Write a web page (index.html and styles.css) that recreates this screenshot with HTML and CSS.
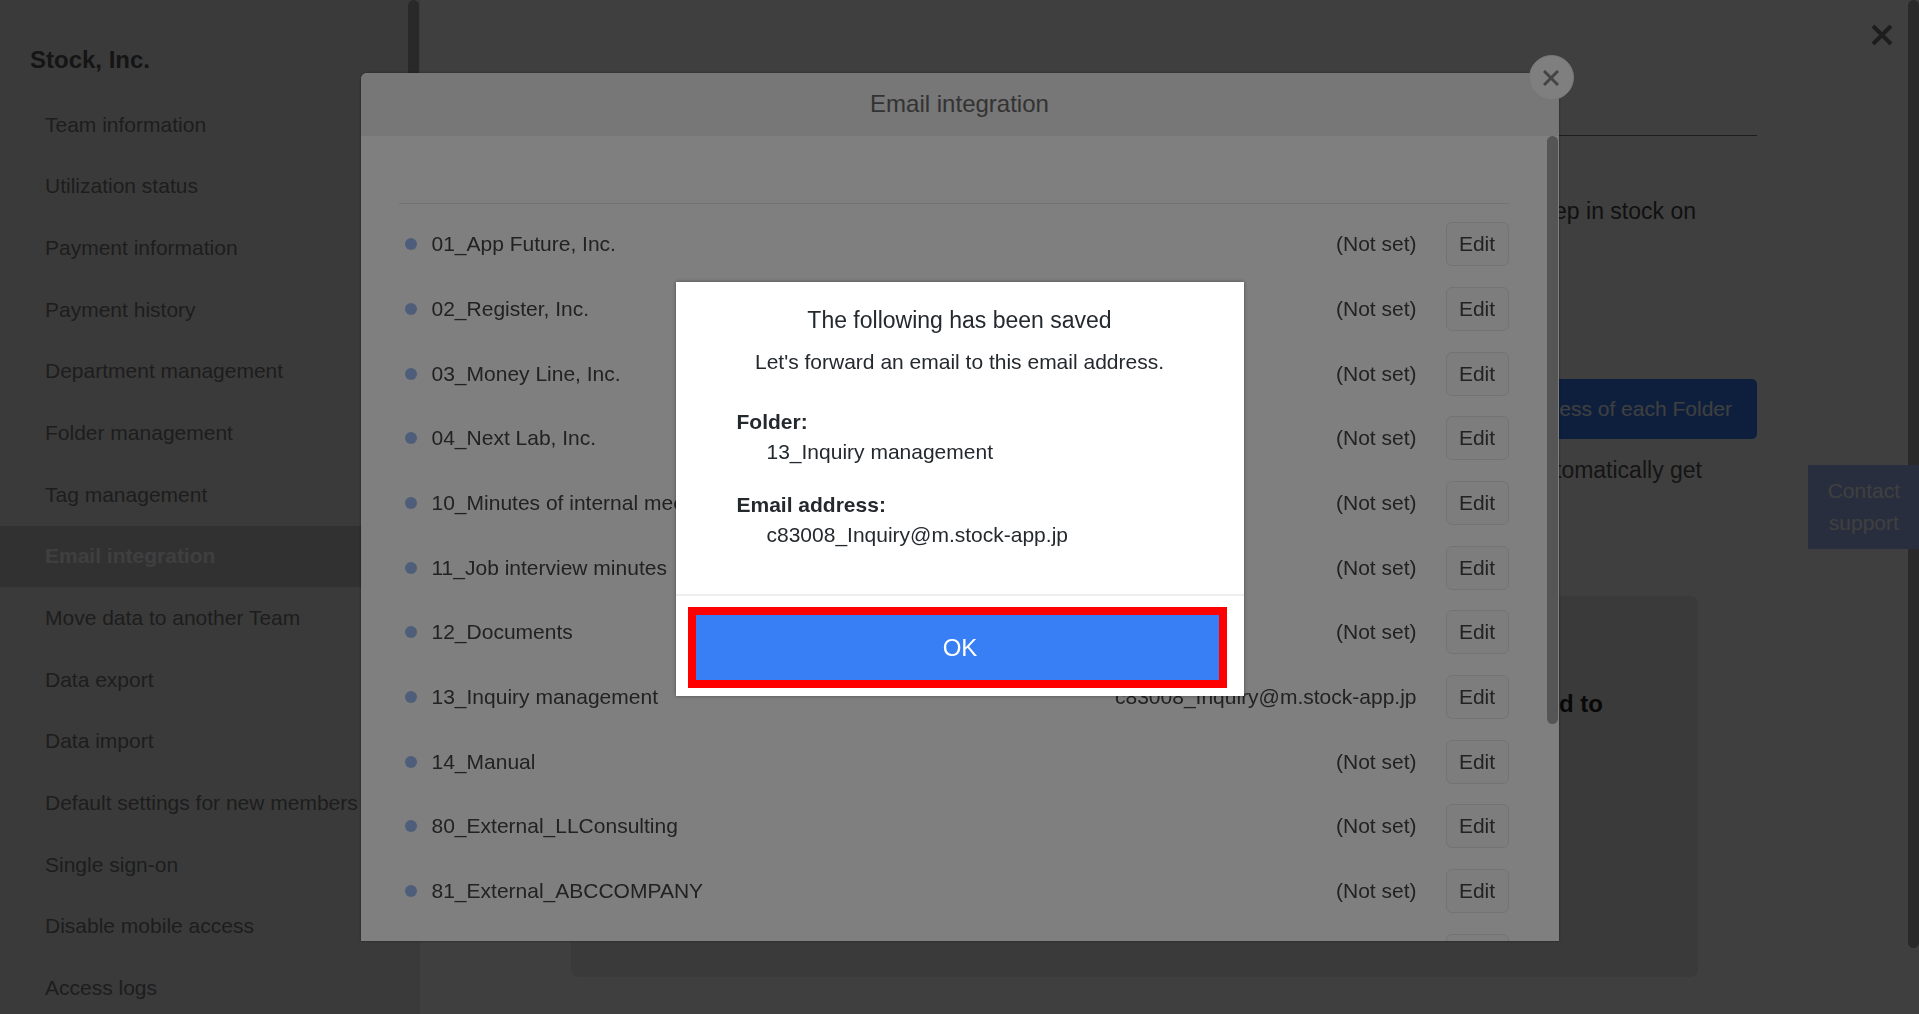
FILE: index.html
```html
<!DOCTYPE html>
<html lang="en">
<head>
<meta charset="utf-8">
<title>Email integration</title>
<link rel="stylesheet" href="styles.css">
</head>
<body>
<div class="app">
  <aside class="sidebar">
    <h1 class="team">Stock, Inc.</h1>
    <nav class="menu">
      <a href="#">Team information</a>
      <a href="#">Utilization status</a>
      <a href="#">Payment information</a>
      <a href="#">Payment history</a>
      <a href="#">Department management</a>
      <a href="#">Folder management</a>
      <a href="#">Tag management</a>
      <a href="#" class="active">Email integration</a>
      <a href="#">Move data to another Team</a>
      <a href="#">Data export</a>
      <a href="#">Data import</a>
      <a href="#">Default settings for new members</a>
      <a href="#">Single sign-on</a>
      <a href="#">Disable mobile access</a>
      <a href="#">Access logs</a>
    </nav>
    <span class="thumb thumb-side"></span>
  </aside>
  <main class="content">
    <button class="page-close" aria-label="Close settings">
      <svg viewBox="0 0 24 24" width="24" height="24"><path d="M3 3L21 21M21 3L3 21" stroke="currentColor" stroke-width="4" fill="none"/></svg>
    </button>
    <hr class="rule">
    <p class="lead">keep in stock on</p>
    <button class="addresses">address of each Folder</button>
    <p class="note">automatically get</p>
    <section class="panel"><h2>forward to</h2></section>
    <span class="thumb thumb-page"></span>
  </main>
  <button class="support">Contact<br>support</button>
</div>

<div class="overlay">
  <section class="modal" aria-label="Email integration">
    <header class="modal-head"><h2>Email integration</h2></header>
    <button class="modal-close" aria-label="Close">
      <svg viewBox="0 0 16 16" width="16" height="16"><path d="M1 1L15 15M15 1L1 15" stroke="currentColor" stroke-width="3" fill="none"/></svg>
    </button>
    <div class="modal-body">
      <ul class="folders">
        <li><span class="name">01_App Future, Inc.</span><span>(Not set)</span><button>Edit</button></li>
        <li><span class="name">02_Register, Inc.</span><span>(Not set)</span><button>Edit</button></li>
        <li><span class="name">03_Money Line, Inc.</span><span>(Not set)</span><button>Edit</button></li>
        <li><span class="name">04_Next Lab, Inc.</span><span>(Not set)</span><button>Edit</button></li>
        <li><span class="name">10_Minutes of internal meetings</span><span>(Not set)</span><button>Edit</button></li>
        <li><span class="name">11_Job interview minutes</span><span>(Not set)</span><button>Edit</button></li>
        <li><span class="name">12_Documents</span><span>(Not set)</span><button>Edit</button></li>
        <li><span class="name">13_Inquiry management</span><span>c83008_Inquiry@m.stock-app.jp</span><button>Edit</button></li>
        <li><span class="name">14_Manual</span><span>(Not set)</span><button>Edit</button></li>
        <li><span class="name">80_External_LLConsulting</span><span>(Not set)</span><button>Edit</button></li>
        <li><span class="name">81_External_ABCCOMPANY</span><span>(Not set)</span><button>Edit</button></li>
        <li><span class="name"></span><span></span><button aria-label="Edit"></button></li>
      </ul>
      <span class="thumb thumb-modal"></span>
    </div>
  </section>
</div>

<div class="overlay overlay-top">
  <section class="dialog" role="dialog" aria-labelledby="saved">
    <div class="dialog-body">
      <h2 id="saved">The following has been saved</h2>
      <p class="hint">Let's forward an email to this email address.</p>
      <dl>
        <dt>Folder:</dt>
        <dd>13_Inquiry management</dd>
        <dt>Email address:</dt>
        <dd>c83008_Inquiry@m.stock-app.jp</dd>
      </dl>
    </div>
    <footer class="dialog-foot"><button>OK</button></footer>
  </section>
</div>
</body>
</html>
```

FILE: styles.css
```css
* { box-sizing: border-box; }

body {
  margin: 0;
  height: 100vh;
  overflow: hidden;
  font: 21px/30px "Liberation Sans", Arial, sans-serif;
  color: #222;
  background: #fff;
}

h1, h2, p, ul, dl, dd { margin: 0; padding: 0; }
button { font: inherit; color: inherit; border: 0; cursor: pointer; }

.app { display: flex; height: 100vh; }

/* Sidebar */
.sidebar {
  position: relative;
  flex: 0 0 420px;
  background: #ebebeb;
}
.team {
  height: 94px;
  padding: 45px 30px 0;
  font-size: 24px;
  color: #555;
}
.menu {
  display: grid;
  grid-auto-rows: 1fr;
  height: calc(100vh - 89px);
}
.menu a {
  display: flex;
  align-items: center;
  padding: 0 45px;
  color: #777;
  text-decoration: none;
}
.menu .active {
  background: #c4c4c8;
  color: #fff;
  font-weight: bold;
}

/* Scrollbar thumbs */
.thumb {
  position: absolute;
  top: 0;
  right: 0;
  width: 11px;
  border-radius: 6px;
  background: #a4a4a4;
}
.thumb-side { height: 80%; right: 1px; }
.thumb-page { height: 948px; }
.thumb-modal { height: 588px; right: 1px; background: #aaa; }

/* Settings page */
.content {
  position: relative;
  flex: 1;
  display: flex;
  flex-direction: column;
  padding: 135px 162px 0 92px;
}
.page-close {
  position: absolute;
  top: 23px;
  right: 25px;
  display: flex;
  padding: 0;
  background: none;
  color: #777;
}
.rule { width: 100%; margin: 0; border: 0; border-top: 1px solid #777; }
.lead, .note { font-size: 23px; text-align: right; }
.lead { padding: 60px 61px 0 0; color: #444; }
.note { padding: 16px 55px 0 0; color: #555; }
.addresses {
  align-self: flex-end;
  height: 60px;
  margin-top: 153px;
  padding: 0 25px;
  border-radius: 5px;
  background: #387ef5;
  color: #fff;
}
.panel {
  height: 381px;
  margin: 111px 59px 0;
  padding: 93px 95px;
  border-radius: 7px;
  background: #ebebeb;
  text-align: right;
}
.panel h2 { font-size: 24px; }
.support {
  position: absolute;
  top: 465px;
  right: 0;
  padding: 10px 19px 10px 20px;
  background: #a0b8f4;
  color: #fff;
  line-height: 32px;
}

/* Overlays */
.overlay {
  position: fixed;
  inset: 0;
  display: flex;
  align-items: center;
  justify-content: center;
  background: rgba(0, 0, 0, .5);
}
.overlay-top { padding-bottom: 36px; }

/* Folder list */
.modal {
  position: relative;
  display: flex;
  flex-direction: column;
  width: 1198px;
  max-width: 90%;
  height: calc(100vh - 146px);
  border-radius: 6px 6px 0 0;
  background: #fff;
  box-shadow: 0 0 3px rgba(0, 0, 0, .4);
}
.modal-head {
  padding: 12px 0 13px;
  border-radius: 6px 6px 0 0;
  background: #eee;
  text-align: center;
}
.modal-head h2 { font-size: 24px; font-weight: normal; line-height: 38px; color: #666; }
.modal-close {
  position: absolute;
  top: -18px;
  right: -15px;
  display: flex;
  align-items: center;
  justify-content: center;
  width: 45px;
  height: 45px;
  padding: 0;
  border: 1px solid #eee;
  border-radius: 50%;
  background: #fff;
  color: #888;
}
.modal-body {
  position: relative;
  flex: 1;
  overflow: hidden;
  padding: 67px 50px 0 38px;
}
.folders {
  display: grid;
  grid-auto-rows: 1fr;
  height: 785px;
  padding-top: 8px;
  border-top: 1px solid #e4e4e4;
  list-style: none;
  color: #444;
}
.folders li {
  display: flex;
  align-items: center;
  gap: 29px;
}
.folders .name {
  display: flex;
  flex: 1;
  align-items: center;
  gap: 15px;
  padding-left: 6px;
}
.folders .name::before {
  content: "";
  width: 12px;
  height: 12px;
  border-radius: 50%;
  background: #9dbcf5;
}
.folders button {
  width: 63px;
  height: 44px;
  padding: 0;
  border: 1px solid #e6e6e6;
  border-radius: 6px;
  background: #fafafa;
}

/* Confirmation */
.dialog {
  width: 568px;
  background: #fff;
  color: #24292e;
  box-shadow: 0 0 4px rgba(0, 0, 0, .4);
}
.dialog-body { padding: 23px 61px 44px; border-bottom: 2px solid #eee; }
.dialog h2 { font-size: 23px; font-weight: normal; text-align: center; }
.hint { margin-top: 12px; text-align: center; }
.dialog dt { margin-top: 30px; font-weight: bold; }
.dialog dd + dt { margin-top: 23px; }
.dialog dd { margin-left: 30px; }
.dialog-foot { padding: 11px 17px 8px 12px; }
.dialog-foot button {
  width: 100%;
  height: 81px;
  padding: 0 0 0 6px;
  border: 8px solid #f00;
  background: #387ef5;
  color: #fff;
  font-size: 24px;
}
```
